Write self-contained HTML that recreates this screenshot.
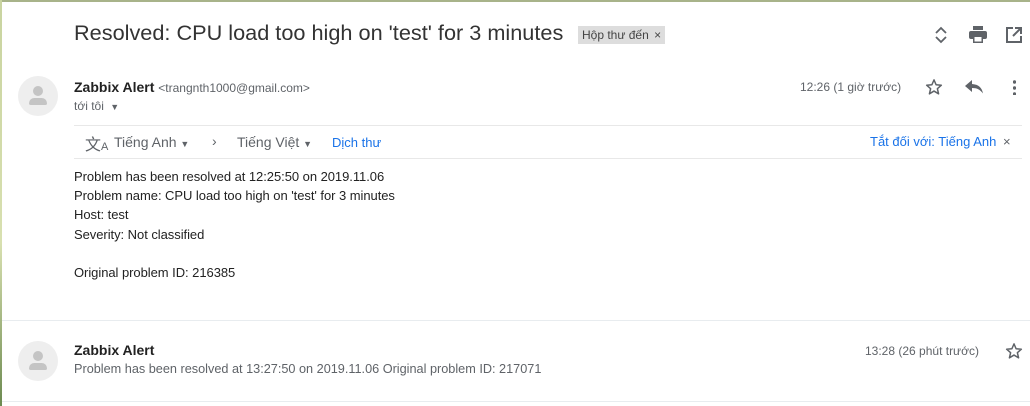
<!DOCTYPE html>
<html><head><meta charset="utf-8"><style>
*{margin:0;padding:0;box-sizing:border-box}
body{width:1030px;height:406px;overflow:hidden;background:#fff;font-family:"Liberation Sans","Noto Sans CJK SC",sans-serif;color:#222;position:relative}
.a{position:absolute;white-space:nowrap}
.av{position:absolute;width:40px;height:40px;border-radius:50%;background:#eee;overflow:hidden}
.av:before{content:"";position:absolute;left:15px;top:10px;width:10px;height:10px;border-radius:50%;background:#c4c4c4}
.av:after{content:"";position:absolute;left:11px;top:22px;width:18px;height:7px;border-radius:6px 6px 2px 2px;background:#c4c4c4}
.g{color:#5f6368}
.b{color:#1a73e8}
</style></head><body>
<div class="a" style="left:0;top:0;width:1030px;height:2px;background:#a8b38a"></div>
<div class="a" style="left:0;top:0;width:2px;height:406px;background:linear-gradient(#c9d4a0,#d8e0b0 60%,#6c8a50)"></div>
<div class="a" style="left:74px;top:20px;font-size:21.7px;color:#333">Resolved: CPU load too high on 'test' for 3 minutes</div>
<div class="a" style="left:578px;top:26px;height:18px;padding:0 4px;background:#ddd;font-size:12px;line-height:18px;color:#444">Hộp thư đến <span style="margin-left:2px">×</span></div>
<svg class="a" style="left:933px;top:25px" width="16" height="20" viewBox="0 0 16 20"><path d="M3 8l5-5 5 5M3 12l5 5 5-5" fill="none" stroke="#5f6368" stroke-width="1.8"/></svg>
<svg class="a" style="left:969px;top:26px" width="18" height="17" viewBox="0 0 18 17"><rect x="4" y="0" width="10" height="4" fill="#5f6368"/><rect x="0" y="5" width="18" height="8" rx="2" fill="#5f6368"/><rect x="4" y="10" width="10" height="7" fill="#5f6368"/><rect x="5.5" y="11" width="7" height="4.5" fill="#fff"/></svg>
<svg class="a" style="left:1006px;top:27px" width="16" height="16" viewBox="0 0 16 16"><path d="M7 1H1v14h14V9M9 1h6v6M15 1L7 9" fill="none" stroke="#5f6368" stroke-width="2"/></svg>
<div class="av" style="left:18px;top:76px"></div>
<div class="a" style="left:74px;top:79px;font-size:14px"><b>Zabbix Alert</b> <span class="g" style="font-size:12px">&lt;trangnth1000@gmail.com&gt;</span></div>
<div class="a g" style="left:74px;top:99px;font-size:12px">tới tôi <span style="font-size:9px;margin-left:3px">▼</span></div>
<div class="a g" style="left:800px;top:80px;font-size:12px">12:26 (1 giờ trước)</div>
<svg class="a" style="left:925px;top:78px" width="18" height="18" viewBox="0 0 24 24"><path d="M12 2.5l2.8 6.5 7 .6-5.3 4.6 1.6 6.9L12 17.4l-6.1 3.7 1.6-6.9L2.2 9.6l7-.6z" fill="none" stroke="#5f6368" stroke-width="2" stroke-linejoin="round"/></svg>
<svg class="a" style="left:965px;top:80px" width="18" height="14" viewBox="0 0 18 14"><path d="M7 0L0 6l7 6V8c5 0 8 1.5 11 5.5C17 8 14 4.5 7 4z" fill="#5f6368"/></svg>
<div class="a" style="left:1013px;top:79px;width:3px;height:16px;background:radial-gradient(circle,#5f6368 1.5px,transparent 2px) 0 0/3px 6px"></div>
<div class="a" style="left:74px;top:125px;width:948px;height:1px;background:#e8e8e8"></div>
<div class="a" style="left:74px;top:158px;width:948px;height:1px;background:#e8e8e8"></div>
<div class="a g" style="left:85px;top:131px;font-size:16px">文<span style="font-size:11px">A</span></div>
<div class="a g" style="left:114px;top:134px;font-size:14px">Tiếng Anh <span style="font-size:9px">▼</span></div>
<div class="a g" style="left:212px;top:133px;font-size:14px">›</div>
<div class="a g" style="left:237px;top:134px;font-size:14px">Tiếng Việt <span style="font-size:9px">▼</span></div>
<div class="a b" style="left:332px;top:135px;font-size:13px">Dịch thư</div>
<div class="a b" style="left:870px;top:134px;font-size:13px">Tắt đối với: Tiếng Anh <span class="g" style="margin-left:3px">×</span></div>
<div class="a" style="left:74px;top:167px;font-size:13px;line-height:19.2px;letter-spacing:-0.05px">Problem has been resolved at 12:25:50 on 2019.11.06<br>Problem name: CPU load too high on 'test' for 3 minutes<br>Host: test<br>Severity: Not classified<br><br>Original problem ID: 216385</div>
<div class="a" style="left:2px;top:320px;width:1028px;height:1px;background:#e8ecef"></div>
<div class="av" style="left:18px;top:341px"></div>
<div class="a" style="left:74px;top:342px;font-size:14px"><b>Zabbix Alert</b></div>
<div class="a g" style="left:74px;top:362px;font-size:12.7px">Problem has been resolved at 13:27:50 on 2019.11.06 Original problem ID: 217071</div>
<div class="a g" style="left:865px;top:344px;font-size:12px">13:28 (26 phút trước)</div>
<svg class="a" style="left:1005px;top:342px" width="18" height="18" viewBox="0 0 24 24"><path d="M12 2.5l2.8 6.5 7 .6-5.3 4.6 1.6 6.9L12 17.4l-6.1 3.7 1.6-6.9L2.2 9.6l7-.6z" fill="none" stroke="#5f6368" stroke-width="2" stroke-linejoin="round"/></svg>
<div class="a" style="left:2px;top:401px;width:1028px;height:1px;background:#e8ecef"></div>
</body></html>
